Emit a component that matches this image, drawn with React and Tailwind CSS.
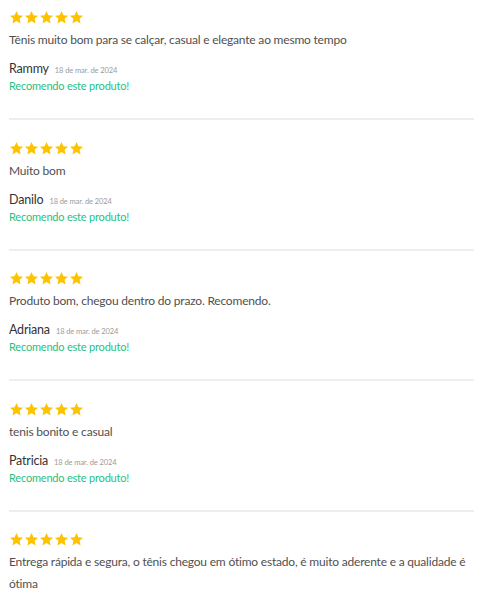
const reviews = [
  { text: 'Tênis muito bom para se calçar, casual e elegante ao mesmo tempo', name: 'Rammy', date: '18 de mar. de 2024' },
  { text: 'Muito bom', name: 'Danilo', date: '18 de mar. de 2024' },
  { text: 'Produto bom, chegou dentro do prazo. Recomendo.', name: 'Adriana', date: '18 de mar. de 2024' },
  { text: 'tenis bonito e casual', name: 'Patricia', date: '18 de mar. de 2024' },
  {
    text: 'Entrega rápida e segura, o tênis chegou em ótimo estado, é muito aderente e a qualidade é ótima',
    name: 'Marcos',
    date: '18 de mar. de 2024',
  },
]

function Star() {
  return (
    <svg width="15" height="15" viewBox="0 0 24 24" className="block">
      <path
        d="M12 1.5l3.09 6.9 7.41.74-5.6 5.01 1.6 7.35L12 17.77 5.5 21.5l1.6-7.35-5.6-5.01 7.41-.74z"
        fill="#fdc300"
      />
    </svg>
  )
}

function Review({ review }) {
  return (
    <div className="pt-[10px] pb-[24px] border-b-2 border-[#eeeeee]">
      <div className="flex">
        {[0, 1, 2, 3, 4].map((i) => (
          <Star key={i} />
        ))}
      </div>
      <p className="mt-[4px] text-[12px] leading-[22px] tracking-[-0.2px] text-[#505050]">{review.text}</p>
      <div className="mt-[9px] flex items-baseline gap-[6px]">
        <span className="text-[12.5px] leading-[18px] tracking-[-0.2px] text-[#333333]">{review.name}</span>
        <span className="text-[7.5px] tracking-[-0.1px] text-[#9a9a9a]">{review.date}</span>
      </div>
      <div className="text-[11px] leading-[16px] tracking-[-0.2px] text-[#27c17f]">Recomendo este produto!</div>
    </div>
  )
}

export default function App() {
  return (
    <div className="w-[500px] bg-white px-[9px] font-['Lato',sans-serif]">
      <div className="w-[465px] flex flex-col gap-[10.5px]">
        {reviews.map((r, i) => (
          <Review key={i} review={r} />
        ))}
      </div>
    </div>
  )
}
